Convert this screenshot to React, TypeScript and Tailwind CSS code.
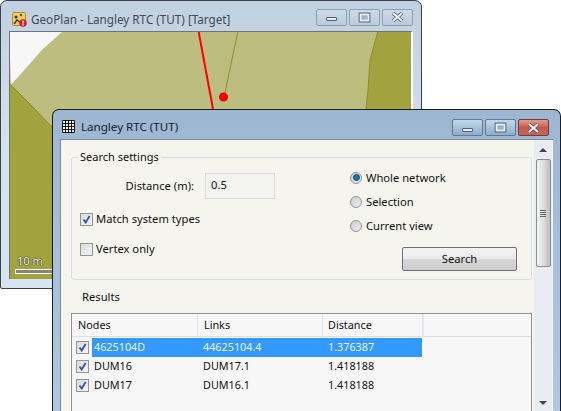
const ui = "font-['Noto_Sans','Open_Sans',sans-serif]"

function CaptionButtons({ active }: { active?: boolean }) {
  const base = 'w-[31px] h-[17px] rounded-[2px] border flex items-center justify-center'
  const tone = active
    ? 'border-[#5f7a96] bg-gradient-to-b from-[#c5d7e8] via-[#a9c2da] to-[#8fadc9]'
    : 'border-[#8ca0b5] bg-gradient-to-b from-[#ccdae8] to-[#b9cbdd]'
  return (
    <div className="flex gap-[2px]">
      <div className={`${base} ${tone}`}>
        <div className="w-[11px] h-[4px] mt-[4px] bg-[#e6ebf0] border border-[#55606c] rounded-[1px]" />
      </div>
      <div className={`${base} ${tone}`}>
        <div className="w-[11px] h-[9px] bg-[#9db4ca] border-2 border-[#eef2f6] outline outline-1 outline-[#55606c] scale-90" />
      </div>
      <div
        className={`${base} ${
          active
            ? 'border-[#7a3a36] bg-gradient-to-b from-[#dd9c92] via-[#c9584c] to-[#c0675c]'
            : tone
        }`}
      >
        <svg width="13" height="10" viewBox="0 0 13 10">
          <path d="M2 1l9 8M11 1l-9 8" stroke="#4c5560" strokeWidth="3.6" />
          <path d="M2 1l9 8M11 1l-9 8" stroke="#f1f3f5" strokeWidth="2.2" />
        </svg>
      </div>
    </div>
  )
}

function GeoPlanIcon() {
  return (
    <svg width="15" height="15" viewBox="0 0 15 15" className="shrink-0">
      <rect x="0.5" y="0.5" width="13" height="13" rx="1" fill="#f3cf5e" stroke="#b98a2a" />
      <circle cx="4" cy="5" r="1.5" fill="#333" />
      <circle cx="9" cy="3" r="1.2" fill="#555" />
      <path d="M2 12l3-4 3 2" stroke="#333" strokeWidth="1.4" fill="none" />
      <circle cx="11" cy="11" r="3.8" fill="#d3222a" />
      <rect x="10.4" y="8.6" width="1.3" height="3" fill="#fff" />
      <rect x="10.4" y="12.2" width="1.3" height="1.2" fill="#fff" />
    </svg>
  )
}

function GeoPlanWindow() {
  return (
    <div className="absolute left-0 top-0 w-[422px] h-[289px] rounded-t-[7px] rounded-b-[2px] border border-[#3e4246] bg-gradient-to-b from-[#bfd0e0] via-[#d5e2ee] to-[#d8e5f1] px-[8px] pb-[9px]">
      <div className="h-[30px] flex items-center justify-between">
        <div className="flex items-center gap-[4px] pl-[3px] pt-[7px]">
          <GeoPlanIcon />
          <span className="text-[11.7px] text-[#3f4a55]">GeoPlan - Langley RTC (TUT) [Target]</span>
        </div>
        <div className="pt-[2px]">
          <CaptionButtons />
        </div>
      </div>
      <div className="relative h-[248px] border-l border-t border-[#6d7378] border-r-2 border-r-white bg-[#bdbd7f] overflow-hidden">
        <svg width="403" height="248" viewBox="10 32 403 248" className="block">
          <rect x="9" y="31" width="404" height="249" fill="#bdbd80" />
          <polygon points="9,31 63,31 42,50 11,85" fill="#f7f7f7" />
          <polygon points="9,85 11,85 30,104 52,127 52,280 9,280" fill="#a2a23e" stroke="#8e8e20" />
          <polygon points="378,31 370,60 368,90 366,109 366,280 413,280 413,31" fill="#a2a23e" stroke="#8e8e20" />
          <line x1="238" y1="31" x2="224" y2="97" stroke="#8e8e2a" strokeWidth="1" />
          <line x1="198.5" y1="31" x2="213" y2="109" stroke="#ff0000" strokeWidth="2" />
          <circle cx="223.5" cy="97" r="4.5" fill="#f00000" />
          <rect x="15.5" y="269.5" width="40" height="4" fill="#858575" stroke="#fff" />
        </svg>
        <span className="absolute left-[7px] top-[223px] text-[11px] leading-none text-white [text-shadow:0_0_1px_#000,0_0_1px_#000]">10 m</span>
      </div>
    </div>
  )
}

function Check({ checked }: { checked?: boolean }) {
  return (
    <div className="w-[13px] h-[13px] border border-[#8e998e] bg-gradient-to-br from-[#d8dadf] to-[#f4f5f6] p-[1px] flex items-center justify-center shrink-0">
      {checked && (
        <svg width="9" height="9" viewBox="0 0 9 9">
          <path d="M1.5 4.5l2.2 3L7.6 1" stroke="#3d4f9e" strokeWidth="1.8" fill="none" />
        </svg>
      )}
    </div>
  )
}

function Radio({ checked, label }: { checked?: boolean; label: string }) {
  return (
    <div className="flex items-center gap-[4px] h-[13px]">
      <div className="w-[12px] h-[12px] rounded-full border border-[#8f9499] bg-gradient-to-br from-[#c9cbcf] to-[#f0f0f0] flex items-center justify-center">
        {checked && <div className="w-[7px] h-[7px] rounded-full bg-[#1f6fa8] border border-[#174e78]" />}
      </div>
      <span className="text-[11.2px] text-[#111] leading-none">{label}</span>
    </div>
  )
}

const rows = [
  { node: '4625104D', link: '44625104.4', dist: '1.376387', selected: true },
  { node: 'DUM16', link: 'DUM17.1', dist: '1.418188', selected: false },
  { node: 'DUM17', link: 'DUM16.1', dist: '1.418188', selected: false },
]

function SearchSettings() {
  return (
    <div className="relative h-[123px] rounded-[3px] border border-[#d6dfe6]">
      <span className="absolute left-[6px] -top-[9px] bg-[#f5f5ed] px-[2px] text-[11px] leading-[16px] text-[#111]">Search settings</span>
      <div className="flex h-full">
        <div className="w-[278px] shrink-0 pl-[8px] pt-[15px]">
          <div className="flex items-center h-[26px]">
            <span className="w-[114px] text-right text-[11.2px] text-[#111]">Distance (m):</span>
            <div className="ml-[11px] w-[70px] h-[26px] border border-[#dcdcd8] bg-[#f3f3f0] pl-[5px] text-[11.2px] leading-[21px] text-[#111]">0.5</div>
          </div>
          <div className="flex items-center gap-[3px] mt-[13px] h-[15px]">
            <Check checked />
            <span className="text-[11.2px] text-[#111]">Match system types</span>
          </div>
          <div className="flex items-center gap-[3px] mt-[15px] h-[15px]">
            <Check />
            <span className="text-[11.2px] text-[#111]">Vertex only</span>
          </div>
        </div>
        <div className="pt-[13px] flex-1">
          <div className="flex flex-col gap-[11px]">
            <Radio checked label="Whole network" />
            <Radio label="Selection" />
            <Radio label="Current view" />
          </div>
          <div className="ml-[52px] mt-[15px] w-[115px] h-[24px] rounded-[2px] border border-[#707070] bg-[linear-gradient(#f2f2f2_0%,#ebebeb_50%,#d8d8d8_50%,#cdcdcd_100%)] text-center text-[11.2px] leading-[22px] text-[#111]">Search</div>
        </div>
      </div>
    </div>
  )
}

function ResultsTable() {
  return (
    <div className="h-[100px] border border-[#8e9294] border-b-0 bg-[#f7f7f7] text-[10.8px] text-[#111]">
      <div className="flex h-[23px] border-b border-[#d8dfe6] items-center">
        <div className="w-[125px] pl-[6px]">Nodes</div>
        <div className="w-[125px] pl-[6px] border-l border-[#e4e8ec] h-full leading-[22px]">Links</div>
        <div className="w-[102px] pl-[5px] border-l border-r-2 border-[#e4e8ec] h-full leading-[22px]">Distance</div>
      </div>
      <div className="pt-[1px]">
        {rows.map((r) => (
          <div key={r.node} className="flex h-[19px] items-center">
            <div className="w-[20px] pl-[4px] shrink-0">
              <Check checked />
            </div>
            <div
              className={`flex w-[330px] h-full items-center ${
                r.selected ? 'bg-[#3399ff] text-[#eef6ff]' : ''
              }`}
            >
              <span className="w-[111px] pl-[2px]">{r.node}</span>
              <span className="w-[125px]">{r.link}</span>
              <span>{r.dist}</span>
            </div>
          </div>
        ))}
      </div>
    </div>
  )
}

function ScrollBar() {
  return (
    <div className="w-[18px] flex flex-col items-center bg-[#e9edf3]">
      <div className="h-[19px] flex items-center justify-center">
        <div className="w-0 h-0 border-x-[4px] border-x-transparent border-b-[4px] border-b-[#444]" />
      </div>
      <div className="w-[15px] h-[108px] rounded-[2px] border border-[#8b8f93] bg-gradient-to-r from-[#f4f4f4] via-[#dedede] to-[#bdbdbd] flex flex-col items-center justify-center gap-[1px]">
        <div className="w-[6px] h-px bg-[#666]" />
        <div className="w-[6px] h-px bg-[#666]" />
        <div className="w-[6px] h-px bg-[#666]" />
        <div className="w-[6px] h-px bg-[#666]" />
      </div>
      <div className="flex-1" />
      <div className="h-[16px] flex items-center justify-center">
        <div className="w-0 h-0 border-x-[4px] border-x-transparent border-t-[4px] border-t-[#444]" />
      </div>
    </div>
  )
}

function SearchWindow() {
  return (
    <div className="absolute left-[52px] top-[109px] w-[509px] h-[302px] rounded-t-[7px] border border-b-0 border-[#1c1f22] bg-gradient-to-b from-[#9db7d3] to-[#b0c8e2] px-[7px] flex flex-col">
      <div className="h-[29px] flex items-center justify-between shrink-0">
        <div className="flex items-center gap-[6px] pl-[2px] pt-[5px]">
          <svg width="13" height="13" viewBox="0 0 13 13" className="shrink-0">
            <path d="M.5.5h12v12H.5zM.5 3.5h12M.5 6.5h12M.5 9.5h12M3.5.5v12M6.5.5v12M9.5.5v12" stroke="#111" fill="#fff" />
          </svg>
          <span className="text-[11.6px] text-[#15202b]">Langley RTC (TUT)</span>
        </div>
        <div className="pr-[4px] pt-[6px]">
          <CaptionButtons active />
        </div>
      </div>
      <div className="flex-1 flex bg-[#f5f5ed] border-t border-l border-[#7f8a96] overflow-hidden">
        <div className="w-[473px] shrink-0 pl-[10px] pr-[2px] pt-[17px]">
          <SearchSettings />
          <div className="pl-[11px] pt-[9px] h-[33px] text-[11.2px] leading-[16px] text-[#111]">Results</div>
          <ResultsTable />
        </div>
        <ScrollBar />
      </div>
    </div>
  )
}

export default function App() {
  return (
    <div className={`${ui} relative w-[561px] h-[411px] overflow-hidden bg-white`}>
      <GeoPlanWindow />
      <SearchWindow />
    </div>
  )
}
